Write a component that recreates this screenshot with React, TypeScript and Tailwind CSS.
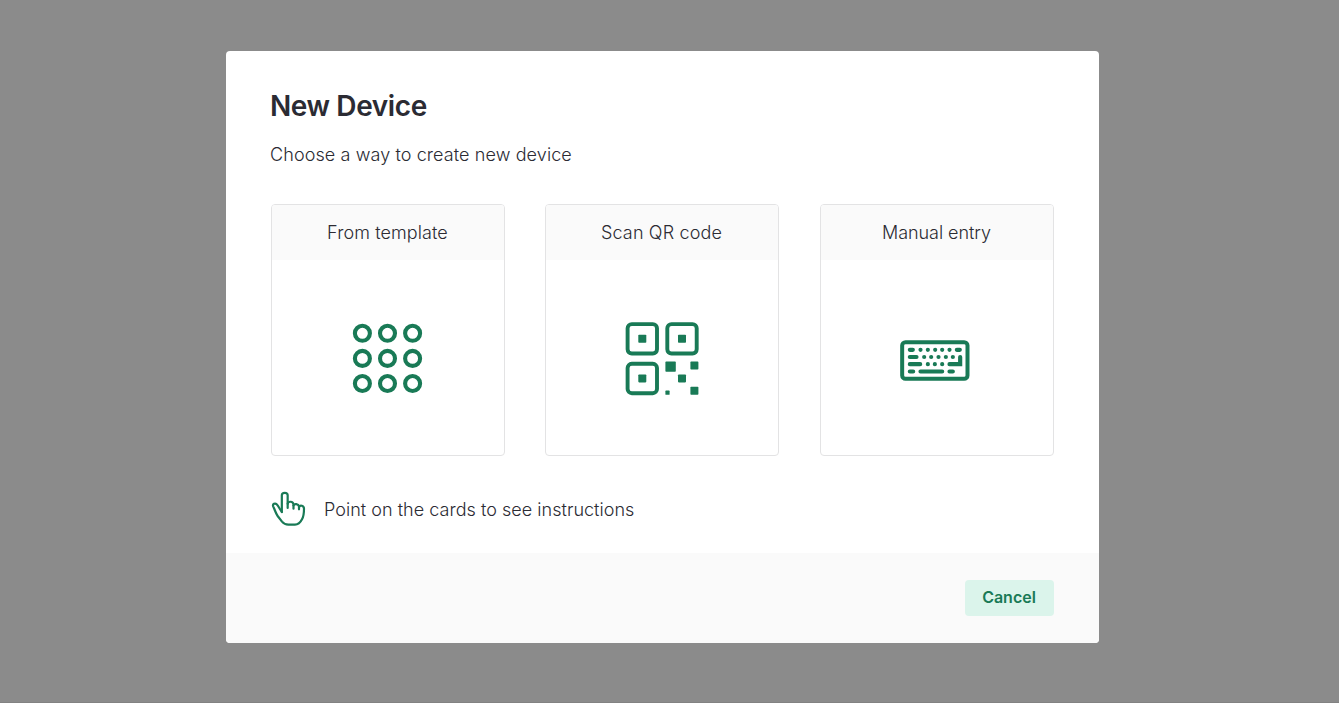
import type { ReactNode } from "react";

function TemplateIcon() {
  const centers = [10, 35.1, 60.2];
  return (
    <svg width="72" height="72" viewBox="-0.4 -1.3 72 72" fill="none" stroke="#197a56" strokeWidth="4.1">
      {centers.map((cy) => centers.map((cx) => <circle key={`${cx}-${cy}`} cx={cx} cy={cy} r="7.5" />))}
    </svg>
  );
}

function QrIcon() {
  return (
    <svg width="74" height="74" viewBox="0 0.4 74 74" fill="#197a56">
      <g fill="none" stroke="#197a56" strokeWidth="3.9">
        <rect x="2.6" y="2.5" width="29.4" height="29.4" rx="4.2" />
        <rect x="42.3" y="2.5" width="29.4" height="29.4" rx="4.2" />
        <rect x="2.6" y="42.2" width="29.4" height="29.4" rx="4.2" />
      </g>
      <rect x="13.3" y="13.2" width="8" height="8" rx="0.8" />
      <rect x="53" y="13.2" width="8" height="8" rx="0.8" />
      <rect x="13.3" y="52.8" width="8" height="8" rx="0.8" />
      <rect x="40.4" y="40" width="10.4" height="10.2" rx="0.8" />
      <rect x="65.4" y="40" width="8" height="8" rx="0.8" />
      <rect x="53" y="52.8" width="8" height="8" rx="0.8" />
      <rect x="65.4" y="65.2" width="8" height="8" rx="0.8" />
      <rect x="40.4" y="69" width="4.2" height="4.2" rx="0.6" />
    </svg>
  );
}

function KeyboardIcon() {
  return (
    <svg width="70" height="42" viewBox="29.500 29.500 210 126" fill="none" stroke="#197a56" strokeWidth="12.5" strokeLinecap="round">
      <rect x="36" y="36" width="196" height="110" rx="10" strokeWidth="12" />
      <path d="M59 59h9M91 59h.1M113 59h.1M135 59h.1M156 59h.1M178 59h.1M200 59h9" />
      <path d="M59 80.500h20M102 80.500h.1M123 80.500h.1M145 80.500h.1M167 80.500h.1M188 80.500h.1" />
      <path d="M59 102h31M113 102h.1M134 102h.1M156 102h.1" />
      <path d="M178 102h32V80.500" strokeLinejoin="miter" />
      <path d="M59 124h10M91 124h65M178 124h10" />
    </svg>
  );
}

function PointerIcon() {
  return (
    <svg
      width="36"
      height="36"
      viewBox="27 27 108 108"
      fill="none"
      stroke="#197a56"
      strokeWidth="6.6"
      strokeLinecap="round"
      strokeLinejoin="round"
      className="shrink-0"
    >
      <path d="M59.500 90V40C59.500 30 77 30 77 40V78" />
      <path d="M77 65C79 57 93 57 94.500 67V80" />
      <path d="M94.500 70C97 64 109 65 111 73V82" />
      <path d="M111 75C114 68 126 70 126 80C126 94 125 103 120 112C115 122 111 128 99 128H79C69 128 65 125 60 119L47 102C42 95 40 88 37 81L33.500 73C31 66 39 62 44 67C49 72 54 82 59.500 90" />
    </svg>
  );
}

function Card({ title, spacing, children }: { title: string; spacing: string; children: ReactNode }) {
  return (
    <button className="flex h-[252px] w-[234px] flex-col overflow-hidden rounded border border-[#e3e3e4] bg-white">
      <span className={`flex h-[55px] w-full shrink-0 items-center justify-center bg-[#fafafa] pt-px text-lg ${spacing}`}>
        {title}
      </span>
      <span className="flex w-full flex-1 items-center justify-center pt-px">{children}</span>
    </button>
  );
}

export default function App() {
  return (
    <div className="flex h-screen justify-center border-b border-[#828282] bg-[#8b8b8b] pt-[51px] pr-[14px] font-['Inter','Liberation_Sans',sans-serif] font-light text-[#2b2b33]">
      <main className="flex h-[592px] w-[873px] flex-col overflow-hidden rounded bg-white">
        <div className="flex flex-1 flex-col pr-[45px] pl-[45px]">
          <h1 className="mt-9 -ml-px pt-px text-[28px] leading-9 font-semibold tracking-[-0.4px] whitespace-nowrap">New Device</h1>
          <p className="mt-[17px] -ml-px text-lg leading-7 tracking-[0.1px] whitespace-nowrap">Choose a way to create new device</p>
          <div className="mt-[35px] grid grid-cols-[274px_275px_234px]">
            <Card title="From template" spacing="tracking-[0.1px] pr-px">
              <TemplateIcon />
            </Card>
            <Card title="Scan QR code" spacing="tracking-[0.15px] pr-px">
              <span className="pt-px">
                <QrIcon />
              </span>
            </Card>
            <Card title="Manual entry" spacing="tracking-[-0.05px] pr-px">
              <span className="pt-[5px] pr-1">
                <KeyboardIcon />
              </span>
            </Card>
          </div>
          <div className="mt-[35px] flex items-center gap-[17px]">
            <PointerIcon />
            <p className="pt-0.5 text-lg leading-7 tracking-[0.03px] whitespace-nowrap">Point on the cards to see instructions</p>
          </div>
        </div>
        <footer className="flex h-[90px] shrink-0 items-center justify-end bg-[#fafafa] pr-[45px]">
          <button className="h-9 w-[89px] rounded bg-[#dbf4eb] pr-px pb-0.5 text-base font-semibold text-[#197a56]">Cancel</button>
        </footer>
      </main>
    </div>
  );
}
